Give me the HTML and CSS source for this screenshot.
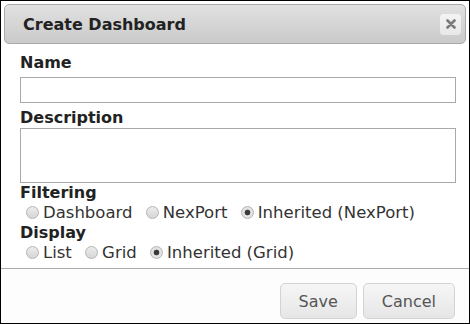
FILE: index.html
```html
<!DOCTYPE html>
<html lang="en">

<head>
    <meta charset="UTF-8">
    <title>Create Dashboard</title>
    <link rel="stylesheet" href="styles.css">
</head>

<body>
    <div class="dialog">
        <div class="titlebar">
            <span class="title">Create Dashboard</span>
            <button class="close" title="Close">
                <svg width="10" height="10" viewBox="0 0 10 10">
                    <path d="M1.5 1.5 L8.5 8.5 M8.5 1.5 L1.5 8.5" stroke="#7a7a7a" stroke-width="2.6" stroke-linecap="round" />
                </svg>
            </button>
        </div>

        <div class="content">
            <label class="field" for="name">Name</label>
            <input id="name" type="text">

            <label class="field" for="desc">Description</label>
            <textarea id="desc"></textarea>

            <div class="field">Filtering</div>
            <div class="choices">
                <label><input type="radio" name="filtering">Dashboard</label>
                <label><input type="radio" name="filtering">NexPort</label>
                <label><input type="radio" name="filtering" checked>Inherited (NexPort)</label>
            </div>

            <div class="field">Display</div>
            <div class="choices">
                <label><input type="radio" name="display">List</label>
                <label><input type="radio" name="display">Grid</label>
                <label><input type="radio" name="display" checked>Inherited (Grid)</label>
            </div>
        </div>

        <div class="footer">
            <button class="btn">Save</button>
            <button class="btn">Cancel</button>
        </div>
    </div>
</body>

</html>
```

FILE: styles.css
```css
html,
body {
    margin: 0;
    background-color: #fff;
}

body {
    font-family: "DejaVu Sans", Verdana, sans-serif;
    font-size: 16px;
    color: #333;
}

.dialog {
    width: 470px;
    height: 324px;
    box-sizing: border-box;
    border: 1px solid #000;
    display: flex;
    flex-direction: column;
}

.titlebar {
    margin: 3px 3px 0 3px;
    height: 40px;
    box-sizing: border-box;
    border: 1px solid #aaa;
    border-radius: 5px;
    background: linear-gradient(#e1e1e1, #cacaca);
    display: flex;
    align-items: center;
    justify-content: space-between;
    padding: 0 4px 0 18px;
}

.title {
    font-weight: bold;
    font-size: 16px;
    color: #222;
}

.close {
    width: 21px;
    height: 21px;
    padding: 0;
    border: none;
    border-radius: 4px;
    background: linear-gradient(#f4f4f4, #e8e8e8);
    display: flex;
    align-items: center;
    justify-content: center;
}

.content {
    flex: 1;
    padding: 9px 14px 0 19px;
}

.field {
    display: block;
    font-weight: bold;
    line-height: 20px;
    color: #222;
}

input[type="text"],
textarea {
    display: block;
    box-sizing: border-box;
    width: 436px;
    margin: 4px 0 5px 0;
    border: 1px solid #aaa;
    font-family: inherit;
    font-size: 16px;
    padding: 2px 4px;
    resize: none;
}

input[type="text"] {
    height: 26px;
}

textarea {
    height: 55px;
    margin: 0;
}

.choices {
    line-height: 20px;
    font-size: 16.5px;
    color: #333;
}

.choices label {
    margin-right: 2px;
}

.choices input {
    appearance: none;
    -webkit-appearance: none;
    width: 13px;
    height: 13px;
    margin: 0 4px 0 6px;
    border: 1px solid #b4b4b4;
    border-radius: 50%;
    background: linear-gradient(#ececec, #d6d6d6);
    vertical-align: -1px;
}

.choices input:checked {
    background: radial-gradient(circle, #3a3a3a 0, #3a3a3a 2.5px, #e2e2e2 3.2px);
}

.footer {
    border-top: 1px solid #aaa;
    background-color: #fdfdfd;
    height: 55px;
    box-sizing: border-box;
    padding: 14px 14px 0 0;
    display: flex;
    justify-content: flex-end;
    align-items: flex-start;
    gap: 6px;
}

.btn {
    height: 36px;
    padding: 0 18px;
    border: 1px solid #d3d3d3;
    border-radius: 5px;
    background: linear-gradient(#f6f6f6, #e6e6e6);
    font-family: inherit;
    font-size: 16px;
    color: #555;
}
```
